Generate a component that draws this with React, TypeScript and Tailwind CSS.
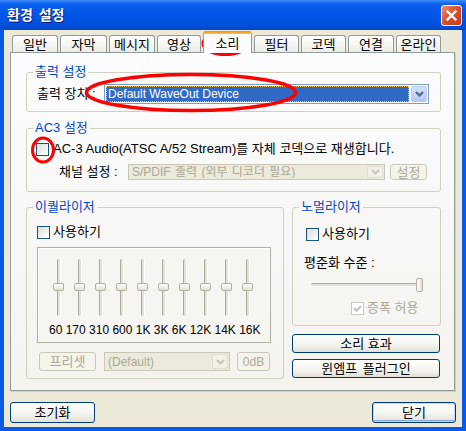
import clsx from "clsx";
import type { ReactNode } from "react";

const FONT = "font-['Liberation_Sans','Noto_Sans_CJK_KR',sans-serif]";

const tabs = [
  { label: "일반", w: "w-[46px]" },
  { label: "자막", w: "w-[47px]" },
  { label: "메시지", w: "w-[46px]" },
  { label: "영상", w: "w-[44px]" },
  { label: "소리", w: "w-[49px]", active: true },
  { label: "필터", w: "w-[45px]" },
  { label: "코덱", w: "w-[45px]" },
  { label: "연결", w: "w-[46px]" },
  { label: "온라인", w: "w-[45px]" },
];

function Chevron({ color }: { color: string }) {
  return (
    <svg width="9" height="6" viewBox="0 0 9 6">
      <path d="M1 1l3.5 3.5L8 1" fill="none" stroke={color} strokeWidth="2" />
    </svg>
  );
}

function Checkbox({ checked, disabled }: { checked?: boolean; disabled?: boolean }) {
  return (
    <span
      className={clsx(
        "flex items-center justify-center w-[13px] h-[13px] shrink-0 border",
        disabled
          ? "border-[#CAC8BB] bg-white"
          : "border-[#1C5180] bg-[linear-gradient(135deg,#DCDCD7,#FFFFFF)]"
      )}
    >
      {checked && (
        <svg width="11" height="11" viewBox="0 0 11 11">
          <path d="M2 5l2.5 2.5L9 3" fill="none" stroke="#C2C0B2" strokeWidth="2" />
        </svg>
      )}
    </span>
  );
}

function Button({
  children,
  className,
  disabled,
  primary,
}: {
  children: ReactNode;
  className?: string;
  disabled?: boolean;
  primary?: boolean;
}) {
  return (
    <div
      className={clsx(
        "flex items-center justify-center shrink-0 rounded-[3px] border leading-none whitespace-nowrap",
        disabled
          ? "border-[#C9C7BA] bg-[#F5F4EA] text-[#ACA899]"
          : "border-[#003C74] bg-[linear-gradient(to_bottom,#FFFFFF,#F3F3EF_60%,#E2E0D6)]",
        primary && "shadow-[inset_0_0_0_1px_#C2D6F8,inset_0_-1px_0_1px_#89A6E6]",
        className
      )}
    >
      {children}
    </div>
  );
}

function DisabledCombo({ text, className }: { text: string; className?: string }) {
  return (
    <div className={clsx("flex shrink-0 border border-[#C9C7BA] bg-[#EBEADB] p-[1px] text-[12px]", className)}>
      <div className="flex-1 flex items-center pl-[2px] text-[#ACA899] whitespace-nowrap overflow-hidden [word-spacing:1px]">
        {text}
      </div>
      <div className="w-[16px] flex items-center justify-center rounded-[2px] bg-[#F2F1E8] border border-[#E0DED3]">
        <Chevron color="#C9C7BA" />
      </div>
    </div>
  );
}

function Group({ title, className, children }: { title: string; className?: string; children: ReactNode }) {
  return (
    <fieldset className={clsx("border border-[#D0D0BF] rounded-[3px] min-w-0 shrink-0", className)}>
      <legend className="ml-[6px] px-[2px] leading-[14px] text-[#0046D5]">{title}</legend>
      {children}
    </fieldset>
  );
}

function VSlider() {
  return (
    <div className="relative w-[21px] h-[57px] flex justify-center">
      <div className="w-[4px] h-full rounded-[2px] border-l border-[#ABA99B] border-r border-r-white bg-[#E4E2D8]" />
      <div className="absolute left-[5px] top-[24px] w-[11px] h-[8px] rounded-[2px] border border-[#B3B0A0] bg-[linear-gradient(to_bottom,#FFFFFF,#E2E0D5)]" />
    </div>
  );
}

export default function App() {
  return (
    <div className={clsx("relative w-[466px] h-[431px] overflow-hidden flex flex-col text-[13px] text-black", FONT)}>
      {/* Title bar */}
      <div className="h-[30px] shrink-0 flex items-center justify-between pl-[7px] pr-[4px] bg-[linear-gradient(to_bottom,#3D8EF7_0%,#0B5FEF_14%,#0055E6_50%,#0050DD_85%,#0346C4_100%)]">
        <span className="text-white font-bold text-[14px] leading-none [word-spacing:2px] [text-shadow:1px_1px_0_#0A1883]">
          환경 설정
        </span>
        <div className="w-[21px] h-[21px] rounded-[3px] border border-white bg-[linear-gradient(135deg,#F08C6C,#D9532E_45%,#C0391A)] flex items-center justify-center">
          <svg width="13" height="13" viewBox="0 0 13 13">
            <path d="M2.5 2.5l8 8M10.5 2.5l-8 8" stroke="white" strokeWidth="2.4" strokeLinecap="square" />
          </svg>
        </div>
      </div>

      {/* Body */}
      <div className="flex-1 flex flex-col bg-[#ECE9D8] border-x-4 border-b-4 border-[#0A5AE6] px-[6px] pt-[1px]">
        {/* Tabs */}
        <div className="flex items-end h-[22px] pl-[2px] gap-[2px]">
          {tabs.map((t) =>
            t.active ? (
              <div key={t.label} className={clsx("relative z-10 flex flex-col h-[22px] shrink-0", t.w)}>
                <div className="h-[3px] rounded-t-[3px] bg-[linear-gradient(to_bottom,#E68B2C,#FFC73C)]" />
                <div className="flex-1 border-x border-[#919B9C] bg-[#FCFCFE] flex items-center justify-center leading-none">
                  {t.label}
                </div>
              </div>
            ) : (
              <div
                key={t.label}
                className={clsx(
                  "h-[18px] shrink-0 flex items-center justify-center pb-px leading-none rounded-t-[3px] border border-b-0 border-[#919B9C] bg-[linear-gradient(to_bottom,#FFFFFF,#ECEBE5)]",
                  t.w
                )}
              >
                {t.label}
              </div>
            )
          )}
        </div>

        {/* Panel */}
        <div className="relative -mt-px w-[445px] h-[339px] border border-[#919B9C] bg-[linear-gradient(to_bottom,#FCFCFE,#F4F3EE)] pt-[12px] pl-[15px] pr-[13px] shadow-[1px_1px_0_#D3D0C0]">
          <Group title="출력 설정" className="w-[415px]">
            <div className="pl-[10px] pt-[5px] pb-[7px] flex items-center">
              <span className="w-[67px] shrink-0 whitespace-nowrap">출력 장치 :</span>
              <div className="flex w-[325px] h-[20px] border border-[#7F9DB9] bg-white p-[1px] text-[12px]">
                <div className="flex-1 flex items-center bg-[#316AC5] border border-dotted border-[#E9C15A] text-white pl-[1px] whitespace-nowrap">
                  Default WaveOut Device
                </div>
                <div className="ml-[2px] w-[16px] flex items-center justify-center rounded-[2px] border border-[#BACBF5] bg-[linear-gradient(to_bottom,#D6E0FB,#B4C7F5)]">
                  <Chevron color="#4D6185" />
                </div>
              </div>
            </div>
          </Group>

          <Group title="AC3 설정" className="w-[415px] mt-[9px]">
            <div className="pl-[9px] pt-[6px] pb-[11px] flex flex-col gap-[7px]">
              <div className="h-[16px] flex items-center gap-[4px] whitespace-nowrap">
                <Checkbox />
                <span>AC-3 Audio(ATSC A/52 Stream)를 자체 코덱으로 재생합니다.</span>
              </div>
              <div className="h-[16px] flex items-center">
                <span className="ml-[23px] w-[69px] shrink-0 whitespace-nowrap">채널 설정 :</span>
                <DisabledCombo text="S/PDIF 출력 (외부 디코더 필요)" className="w-[257px] h-[16px]" />
                <Button disabled className="ml-[5px] w-[37px] h-[16px]">
                  설정
                </Button>
              </div>
            </div>
          </Group>

          <div className="mt-[8px] flex gap-[8px] items-start">
            {/* Equalizer */}
            <Group title="이퀄라이저" className="w-[258px]">
              <div className="pl-[10px] pr-[12px] pt-[10px] pb-[7px]">
                <div className="h-[16px] flex items-center gap-[3px]">
                  <Checkbox />
                  <span>사용하기</span>
                </div>
                <div className="mt-[7px] h-[96px] border border-[#B2B0A2] shadow-[inset_1px_1px_0_#FFFFFF] bg-[#F6F5F1] pt-[11px]">
                  <div className="flex pl-[10px]">
                    {Array.from({ length: 10 }).map((_, i) => (
                      <VSlider key={i} />
                    ))}
                  </div>
                  <div className="mt-[7px] pl-[11px] leading-[14px] text-[12px] whitespace-nowrap">
                    60 170 310 600 1K 3K 6K 12K 14K 16K
                  </div>
                </div>
                <div className="mt-[9px] h-[19px] flex items-center">
                  <Button disabled className="ml-[2px] w-[57px] h-[19px]">
                    프리셋
                  </Button>
                  <DisabledCombo text="(Default)" className="ml-[8px] w-[126px] h-[19px]" />
                  <Button disabled className="ml-[7px] w-[33px] h-[19px] text-[12px]">
                    0dB
                  </Button>
                </div>
              </div>
            </Group>

            {/* Normalizer + buttons */}
            <div className="w-[149px] flex flex-col">
              <Group title="노멀라이저" className="w-[149px]">
                <div className="pl-[13px] pt-[12px] pb-[9px]">
                  <div className="h-[16px] flex items-center gap-[3px]">
                    <Checkbox />
                    <span>사용하기</span>
                  </div>
                  <div className="mt-[14px] -ml-[2px] leading-[14px] whitespace-nowrap">평준화 수준 :</div>
                  <div className="mt-[8px] ml-[5px] relative w-[112px] h-[14px] flex items-center">
                    <div className="w-full h-[4px] rounded-[2px] border-t border-[#ABA99B] border-b border-b-white bg-[#E4E2D8]" />
                    <div className="absolute right-0 top-0 w-[7px] h-[14px] rounded-[2px] border border-[#B3B0A0] bg-[linear-gradient(to_right,#FFFFFF,#E2E0D5)]" />
                  </div>
                  <div className="mt-[8px] ml-[45px] h-[16px] flex items-center gap-[3px] text-[#ACA899] whitespace-nowrap">
                    <Checkbox checked disabled />
                    <span>증폭 허용</span>
                  </div>
                </div>
              </Group>
              <Button className="mt-[8px] w-[148px] h-[19px]">소리 효과</Button>
              <Button className="mt-[6px] w-[148px] h-[19px] [word-spacing:2px]">윈엠프 플러그인</Button>
            </div>
          </div>
        </div>

        {/* Bottom buttons */}
        <div className="mt-[11px] flex justify-between">
          <Button className="w-[85px] h-[21px]">초기화</Button>
          <Button primary className="w-[84px] h-[21px]">
            닫기
          </Button>
        </div>
      </div>

      {/* Red annotation marks */}
      <svg className="absolute inset-0 pointer-events-none" width="466" height="431" viewBox="0 0 466 431">
        <ellipse cx="225.5" cy="43.5" rx="22.5" ry="11" fill="none" stroke="#FF0000" strokeWidth="3" />
        <ellipse cx="191" cy="92.5" rx="104.5" ry="18" fill="none" stroke="#FF0000" strokeWidth="3.5" />
        <ellipse cx="43" cy="150" rx="10.5" ry="12" fill="none" stroke="#FF0000" strokeWidth="3" />
      </svg>
    </div>
  );
}
